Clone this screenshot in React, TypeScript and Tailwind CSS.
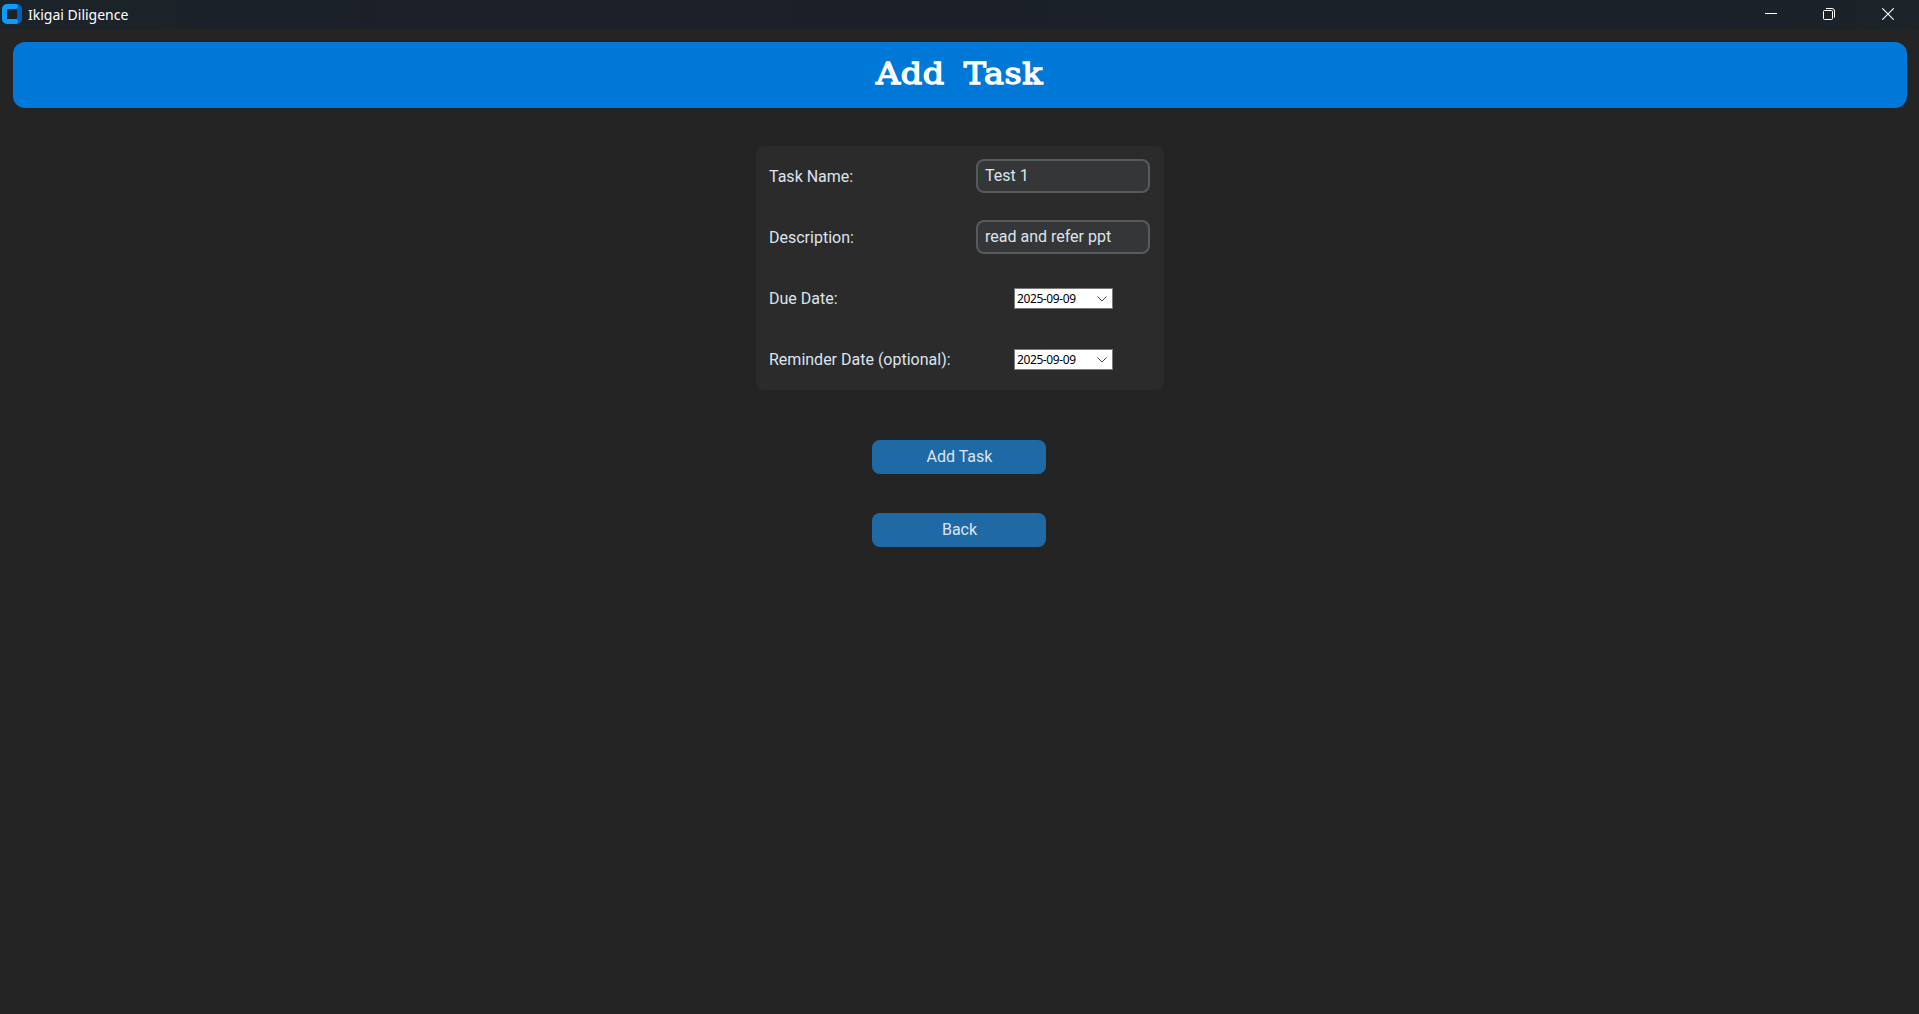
const fields = [
  { label: 'Task Name:', value: 'Test 1', kind: 'text' },
  { label: 'Description:', value: 'read and refer ppt', kind: 'text' },
  { label: 'Due Date:', value: '2025-09-09', kind: 'date' },
  { label: 'Reminder Date (optional):', value: '2025-09-09', kind: 'date' },
];

function Logo() {
  return (
    <svg width="20" height="20" viewBox="0 0 20 20" className="ml-[2px]">
      <path d="M10 0H15A5 5 0 0 1 20 5V15A5 5 0 0 1 15 20H10Z" fill="#0061b5" />
      <path d="M5 0H13.5A2.5 2.5 0 0 1 13.5 5H5V15H13.5A2.5 2.5 0 0 1 13.5 20H5A5 5 0 0 1 0 15V5A5 5 0 0 1 5 0Z" fill="#0a9bff" />
      <rect x="5" y="5" width="10" height="10" rx="1.5" fill="#1b2228" />
    </svg>
  );
}

function TitleBar() {
  return (
    <div className="flex h-[29px] items-center bg-linear-to-r from-[#1b2328] via-[#1c2028] via-25% to-[#1b2228] pb-px text-white">
      <Logo />
      <span className="ml-[6px] pt-px font-['Noto_Sans','Open_Sans',sans-serif] text-[14px] leading-[20px]">Ikigai Diligence</span>
      <div className="ml-auto mr-px flex">
        <div className="flex w-[58px] justify-center">
          <svg width="12" height="12" viewBox="0 0 12 12"><path d="M0 5.5H12" stroke="#fff" /></svg>
        </div>
        <div className="flex w-[58px] justify-center">
          <svg width="12" height="12" viewBox="0 0 12 12" fill="none" stroke="#fff">
            <rect x="0.5" y="2.5" width="9" height="9" rx="1" />
            <path d="M3 0.5H9A2.5 2.5 0 0 1 11.5 3V9.5" />
          </svg>
        </div>
        <div className="flex w-[60px] justify-center">
          <svg width="12" height="12" viewBox="0 0 12 12"><path d="M0.3 0.3L11.7 11.7M11.7 0.3L0.3 11.7" stroke="#fff" strokeWidth="1.1" /></svg>
        </div>
      </div>
    </div>
  );
}

function DateBox({ value }: { value: string }) {
  return (
    <div className="mr-[37px] flex h-[21px] w-[99px] items-center justify-between border border-[#7a7a7a] bg-white pl-[2px] pr-[5px]">
      <span className="font-['Noto_Sans','Open_Sans',sans-serif] text-[12px] leading-[19px] tracking-[-0.4px] text-black">{value}</span>
      <svg width="10" height="6" viewBox="0 0 10 6" fill="none" stroke="#444"><path d="M0.5 0.5L5 5L9.5 0.5" /></svg>
    </div>
  );
}

export default function App() {
  return (
    <div className="flex h-screen flex-col bg-[#242424] font-['Roboto',sans-serif] text-[16px] text-[#dce4ee]">
      <TitleBar />
      <header className="ml-[13px] mr-3 mt-[13px] flex h-[66px] justify-center rounded-[12px] bg-[#0078d7]">
        <h1 className="scale-x-115 pt-[11px] font-['DejaVu_Serif',serif] text-[29px] font-normal leading-[42px] tracking-[0.5px] text-white [-webkit-text-stroke:1.3px_#fff] [word-spacing:7px]">Add Task</h1>
      </header>
      <main className="mr-px flex flex-col items-center">
        <section className="ml-[2px] mt-[38px] w-[408px] rounded-[8px] bg-[#2b2b2b]">
          {fields.map((f) => (
            <div key={f.label} className="flex h-[61px] items-center justify-between pl-[13px] pr-[14px]">
              <label className="leading-[20px]">{f.label}</label>
              {f.kind === 'text' ? (
                <div className="mb-px flex h-[34px] w-[174px] items-center rounded-[8px] border-2 border-[#565b5e] bg-[#343638] pb-px pl-[7px]">{f.value}</div>
              ) : (
                <DateBox value={f.value} />
              )}
            </div>
          ))}
        </section>
        <button className="mt-[50px] h-[34px] w-[174px] rounded-[8px] bg-[#1f6aa5] pl-px">Add Task</button>
        <button className="mt-[39px] h-[34px] w-[174px] rounded-[8px] bg-[#1f6aa5] pl-px">Back</button>
      </main>
    </div>
  );
}
